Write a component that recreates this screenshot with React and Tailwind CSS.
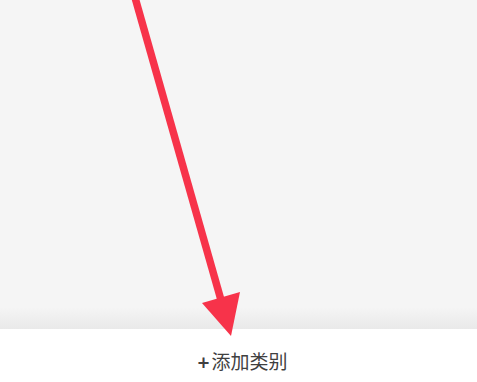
import React from "react";

const App = () => {
  return (
    <div
      className="relative w-[477px] h-[382px] flex flex-col overflow-hidden bg-white"
      style={{ fontFamily: '"Noto Sans", "Noto Sans CJK SC", sans-serif' }}
    >
      {/* empty list area */}
      <div className="flex-1 flex flex-col bg-[#f5f5f5]">
        <div className="flex-1" />
        <div className="h-[22px] bg-gradient-to-b from-[#f5f5f5] to-[#e9e9e9]" />
      </div>

      {/* bottom action bar */}
      <div className="h-[53px] bg-white flex items-center justify-center pt-[14px] pl-[8px]">
        <button className="flex items-center gap-[2px] text-[19px] leading-none text-[#404040]">
          <span className="text-[21px] font-semibold">+</span>
          <span>添加类别</span>
        </button>
      </div>

      {/* annotation arrow */}
      <svg
        className="absolute inset-0 pointer-events-none"
        width="477"
        height="382"
        viewBox="0 0 477 382"
      >
        <line x1="134" y1="-6" x2="221" y2="300" stroke="#f7334a" strokeWidth="7.5" />
        <polygon points="202,303 240,292 231,336" fill="#f7334a" />
      </svg>
    </div>
  );
};

export default App;
